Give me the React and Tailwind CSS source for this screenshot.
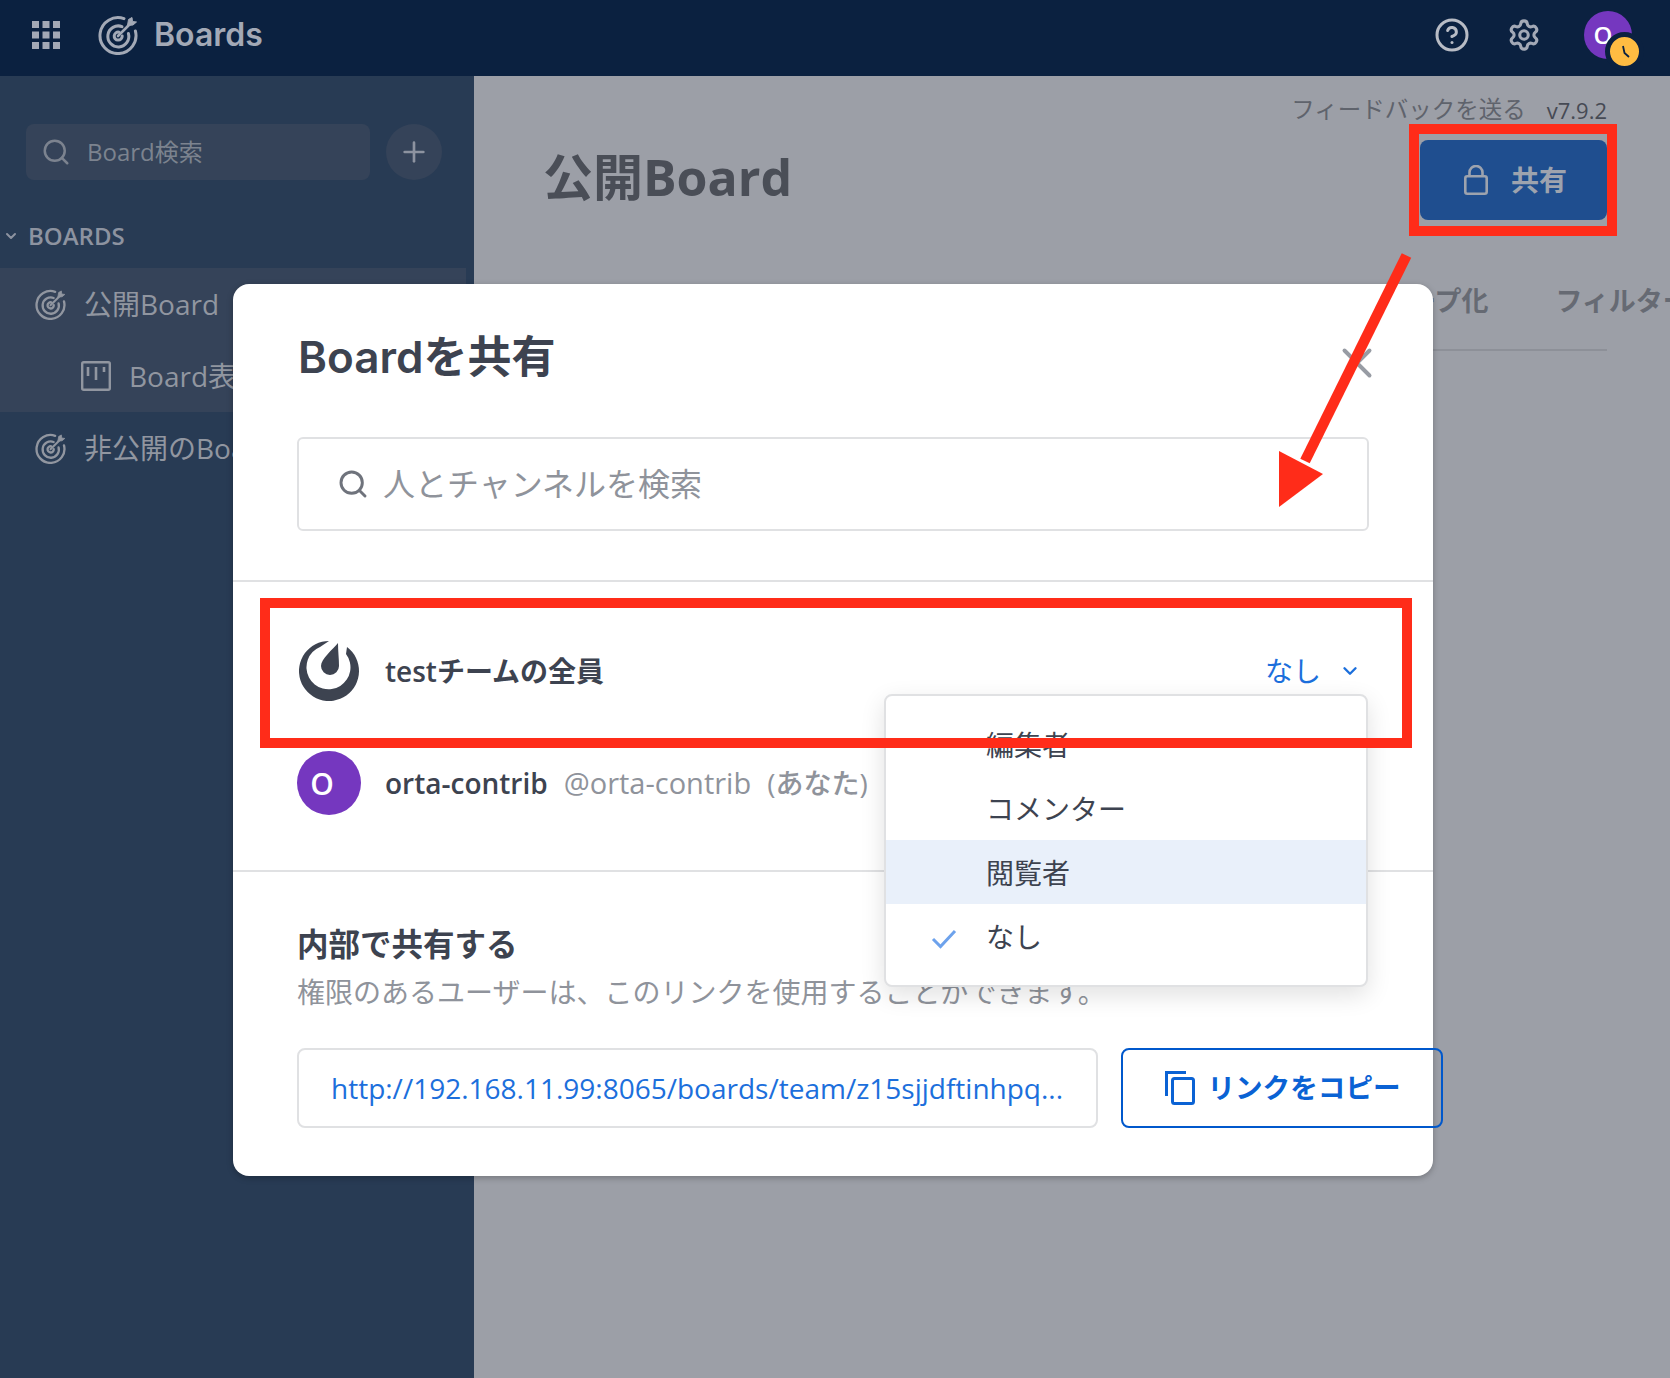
import React from "react";
import { ChevronDown, CircleHelp, Plus, Search, Settings, X } from "lucide-react";

const TargetIcon = ({ className }) => (
    <svg viewBox="0 0 40 40" fill="none" stroke="currentColor" className={className} strokeWidth="3" strokeLinecap="round">
        <path d="M26 3.6A18 18 0 1 0 37.4 16" />
        <path d="M24 11.6A10.5 10.5 0 1 0 30.4 18.5" />
        <path d="M21 17.2A4 4 0 1 0 24.2 21" />
        <path d="M20 21L33 8" strokeWidth="2.6" />
        <path d="M29.5 10.5L30.5 4.5L34 2.5L34.5 6.5L38.5 7L35 10L29.5 10.5Z" fill="currentColor" strokeWidth="1" />
    </svg>
);

const GridIcon = () => (
    <svg viewBox="0 0 28 28" className="w-[28px] h-[28px] text-[#a3a9b6]" fill="currentColor">
        {[0, 10.5, 21].map((y) =>
            [0, 10.5, 21].map((x) => <rect key={`${x}-${y}`} x={x} y={y} width="7" height="7" />)
        )}
    </svg>
);

const BoardIcon = () => (
    <svg viewBox="0 0 30 30" fill="none" stroke="currentColor" strokeWidth="2.4" className="w-[30px] h-[30px]">
        <rect x="1.2" y="1.2" width="27.6" height="27.6" rx="1.5" />
        <path d="M7 6v9M15 6v13M23 6v5" strokeWidth="2.6" />
    </svg>
);

const LockIcon = () => (
    <svg viewBox="0 0 24 30" fill="none" stroke="currentColor" strokeWidth="2.6" className="w-[24px] h-[30px]">
        <rect x="1.3" y="11.3" width="21.4" height="17.4" rx="2" />
        <path d="M5.5 11V7.5a6.5 6.5 0 0 1 13 0V11" />
    </svg>
);

const MattermostIcon = () => (
    <svg viewBox="0 0 60 60" fill="#3d4350" className="w-[60px] h-[60px] shrink-0 ml-[2px]">
        <path d="M30 0A30 30 0 1 0 48 6L47 13A22 22 0 1 1 21 6Z" />
        <path d="M39 2C34 8 22 18 22 25A9 9 0 0 0 40 25C40 18 39 10 39 2Z" />
    </svg>
);

const CopyIcon = () => (
    <svg viewBox="0 0 30 34" fill="none" stroke="currentColor" strokeWidth="3" className="w-[30px] h-[34px]">
        <path d="M1.5 25V1.5H21" />
        <rect x="7.5" y="7.5" width="21" height="25" rx="2" />
    </svg>
);

const CheckIcon = () => (
    <svg viewBox="0 0 26 20" fill="none" stroke="#6da2ec" strokeWidth="3" className="w-[26px] h-[20px]">
        <path d="M2 10L9.5 17.5L24 2" />
    </svg>
);

const SideItem = ({ indent, icon, label }) => (
    <div className={`flex items-center h-[72px] whitespace-nowrap text-[#9196a0] text-[28px] ${indent}`}>
        {icon}
        <span className="ml-[18px]">{label}</span>
    </div>
);

const MenuItem = ({ label, active, checked }) => (
    <div className={`flex items-center h-[64px] pl-[45px] text-[28px] text-[#3d4350] ${active ? "bg-[#e9f0fa]" : ""}`}>
        <span className="w-[26px] flex mr-[-26px] mt-[6px]">{checked && <CheckIcon />}</span>
        <span className="ml-[55px] pt-[2px]">{label}</span>
    </div>
);

export default function App() {
    return (
        <div className="relative w-[1670px] h-[1378px] overflow-hidden flex flex-col bg-[#9c9fa7] font-['Open_Sans','Noto_Sans_CJK_JP',sans-serif]">
            {/* Top bar */}
            <header className="h-[76px] shrink-0 bg-[#0b2140] flex items-center pl-[32px] pb-[6px]">
                <GridIcon />
                <TargetIcon className="ml-[38px] w-[40px] h-[40px] text-[#a3a9b6]" />
                <span className="ml-[16px] text-[32px] font-semibold font-['Inter',sans-serif] text-[#a3a9b6]">Boards</span>
                <div className="ml-auto flex items-center pr-[38px]">
                    <CircleHelp size={36} strokeWidth={2} className="text-[#b8bcc5]" />
                    <Settings size={34} strokeWidth={2.2} className="ml-[37px] text-[#a3a9b6]" />
                    <div className="relative ml-[43px] w-[48px] h-[48px] rounded-full bg-[#7537bf] flex items-center justify-center pr-[10px] text-white text-[24px] font-semibold">
                        O
                        <div className="absolute left-[24px] top-[24px] w-[29px] h-[29px] rounded-full bg-[#ffbc42] border-[5px] border-[#0b2140] box-content -m-[3px] flex items-center justify-center">
                            <svg viewBox="0 0 14 14" className="w-[14px] h-[14px]" stroke="#0b2140" strokeWidth="1.8" fill="none">
                                <path d="M5 1L6.5 8L11 12" />
                            </svg>
                        </div>
                    </div>
                </div>
            </header>

            <div className="flex flex-1 min-h-0">
                {/* Sidebar */}
                <aside className="w-[474px] shrink-0 bg-[#283b54] pt-[48px]">
                    <div className="flex items-center pl-[26px] gap-[16px]">
                        <div className="w-[344px] h-[56px] bg-[#354359] rounded-lg flex items-center pl-[15px] text-[#7c838f]">
                            <Search size={30} strokeWidth={2} />
                            <span className="ml-[16px] text-[24px]">Board検索</span>
                        </div>
                        <div className="w-[56px] h-[56px] rounded-full bg-[#354359] flex items-center justify-center text-[#8d93a0]">
                            <Plus size={32} strokeWidth={2} />
                        </div>
                    </div>
                    <div className="flex items-center h-[32px] mt-[40px] pl-[3px] text-[#8d93a0]">
                        <ChevronDown size={16} strokeWidth={3} />
                        <span className="ml-[9px] text-[24px] font-semibold">BOARDS</span>
                    </div>
                    <div className="mt-[16px] mr-[8px] bg-[#354359]">
                        <SideItem indent="pl-[35px]" icon={<TargetIcon className="w-[31px] h-[31px]" />} label="公開Board" />
                        <SideItem indent="pl-[81px]" icon={<BoardIcon />} label="Board表" />
                    </div>
                    <SideItem indent="pl-[35px]" icon={<TargetIcon className="w-[31px] h-[31px]" />} label="非公開のBoard" />
                </aside>

                {/* Board content */}
                <main className="flex-1 min-w-0 overflow-hidden pt-[18px] pr-[63px]">
                    <div className="flex justify-end items-center h-[32px] text-[23.5px] text-[#5f636c] whitespace-nowrap">
                        <span>フィードバックを送る</span>
                        <span className="ml-[21px] text-[22px] text-[#464a54]">v7.9.2</span>
                    </div>
                    <div className="flex justify-between items-start pl-[71px] mt-[14px]">
                        <h1 className="text-[50px] font-bold leading-[74px] text-[#4a4e57] -ml-[2px]">公開Board</h1>
                        <button className="w-[187px] h-[80px] rounded-lg bg-[#1f4e8f] flex items-center justify-center pl-[4px] text-[#9da3ae]">
                            <LockIcon />
                            <span className="ml-[23px] text-[28px] font-semibold">共有</span>
                        </button>
                    </div>
                    <div className="ml-[71px] mt-[60px] h-[71px] pl-[810px] pt-[1px] flex gap-[67px] border-b-2 border-[#8d9098] text-[27px] font-bold text-[#666a73] whitespace-nowrap">
                        <span className="leading-[40px]">グループ化</span>
                        <span className="leading-[40px]">フィルター</span>
                    </div>
                </main>
            </div>

            {/* Share dialog */}
            <div className="absolute left-[233px] top-[284px] w-[1200px] h-[892px] rounded-[16px] bg-white shadow-[0_2px_6px_rgba(0,0,0,0.25)] text-[#3d4350]">
                <div className="flex justify-between items-start h-[102px] pt-[46px] pl-[65px] pr-[51px]">
                    <h2 className="text-[44px] font-semibold font-['Inter','Noto_Sans_CJK_JP',sans-serif] leading-[56px] -mt-[1px]">Boardを共有</h2>
                    <X size={50} strokeWidth={1.9} className="mt-[8px] text-[#989ca4]" />
                </div>
                <div className="mx-[64px] mt-[51px] h-[94px] border-2 border-[#e0e1e3] rounded-md flex items-center pl-[38px] text-[#8f939b]">
                    <Search size={32} strokeWidth={2.2} className="text-[#6f737c]" />
                    <span className="ml-[14px] text-[32px]">人とチャンネルを検索</span>
                </div>
                <div className="mt-[49px] border-t-2 border-[#e0e1e3]" />

                <div className="px-[64px] pt-[57px]">
                    <div className="flex items-center h-[64px] text-[28px]">
                        <MattermostIcon />
                        <span className="ml-[26px] font-semibold">testチームの全員</span>
                        <span className="ml-auto text-[#1c6fdc] text-[28px]">なし</span>
                        <ChevronDown size={22} strokeWidth={2.6} className="ml-[18px] mr-[8px] text-[#1c6fdc]" />
                    </div>
                    <div className="flex items-center h-[64px] mt-[48px] text-[28px] whitespace-nowrap">
                        <div className="w-[64px] h-[64px] shrink-0 rounded-full bg-[#7537bf] flex items-center justify-center pr-[14px] text-white text-[30px] font-semibold">O</div>
                        <span className="ml-[24px] font-semibold">orta-contrib</span>
                        <span className="ml-[16px] text-[29px] text-[#8f939b]">@orta-contrib</span>
                        <span className="ml-[16px] font-medium text-[#8f939b]">(あなた)</span>
                    </div>
                </div>
                <div className="mt-[55px] border-t-2 border-[#e0e1e3]" />

                <div className="px-[64px] pt-[52px]">
                    <h3 className="text-[31.5px] font-bold leading-[40px]">内部で共有する</h3>
                    <p className="mt-[8px] text-[28px] leading-[40px] text-[#8f939b] whitespace-nowrap">権限のあるユーザーは、このリンクを使用することができます。</p>
                    <div className="flex gap-[23px] mt-[36px]">
                        <div className="w-[801px] h-[80px] shrink-0 border-2 border-[#e0e1e3] rounded-lg flex items-center pl-[32px] text-[28px] text-[#1c6fdc] whitespace-nowrap">
                            http://192.168.11.99:8065/boards/team/z15sjjdftinhpq...
                        </div>
                        <button className="w-[322px] h-[80px] shrink-0 border-2 border-[#0058cc] rounded-lg flex items-center justify-center pl-[2px] text-[#0a62d4] text-[27.6px] font-bold whitespace-nowrap">
                            <CopyIcon />
                            <span className="ml-[12px]">リンクをコピー</span>
                        </button>
                    </div>
                </div>

                {/* Role menu */}
                <div className="absolute left-[651px] top-[410px] w-[484px] h-[293px] pt-[16px] bg-white border-2 border-[#e0e1e3] rounded-lg shadow-[0_8px_24px_rgba(0,0,0,0.12)]">
                    <MenuItem label="編集者" />
                    <MenuItem label="コメンター" />
                    <MenuItem label="閲覧者" active />
                    <MenuItem label="なし" checked />
                </div>
            </div>

            {/* Red annotations */}
            <div className="absolute left-[1409px] top-[124px] w-[208px] h-[112px] border-[10px] border-[#ff2c19]" />
            <div className="absolute left-[260px] top-[598px] w-[1152px] h-[150px] border-[10px] border-[#ff2c19]" />
            <svg viewBox="0 0 150 270" className="absolute left-[1270px] top-[245px] w-[150px] h-[270px]">
                <path d="M136.5 10.5L35 216" stroke="#ff2c19" strokeWidth="10.5" fill="none" />
                <polygon points="9,206 53,229 9,262" fill="#ff2c19" />
            </svg>
        </div>
    );
}
